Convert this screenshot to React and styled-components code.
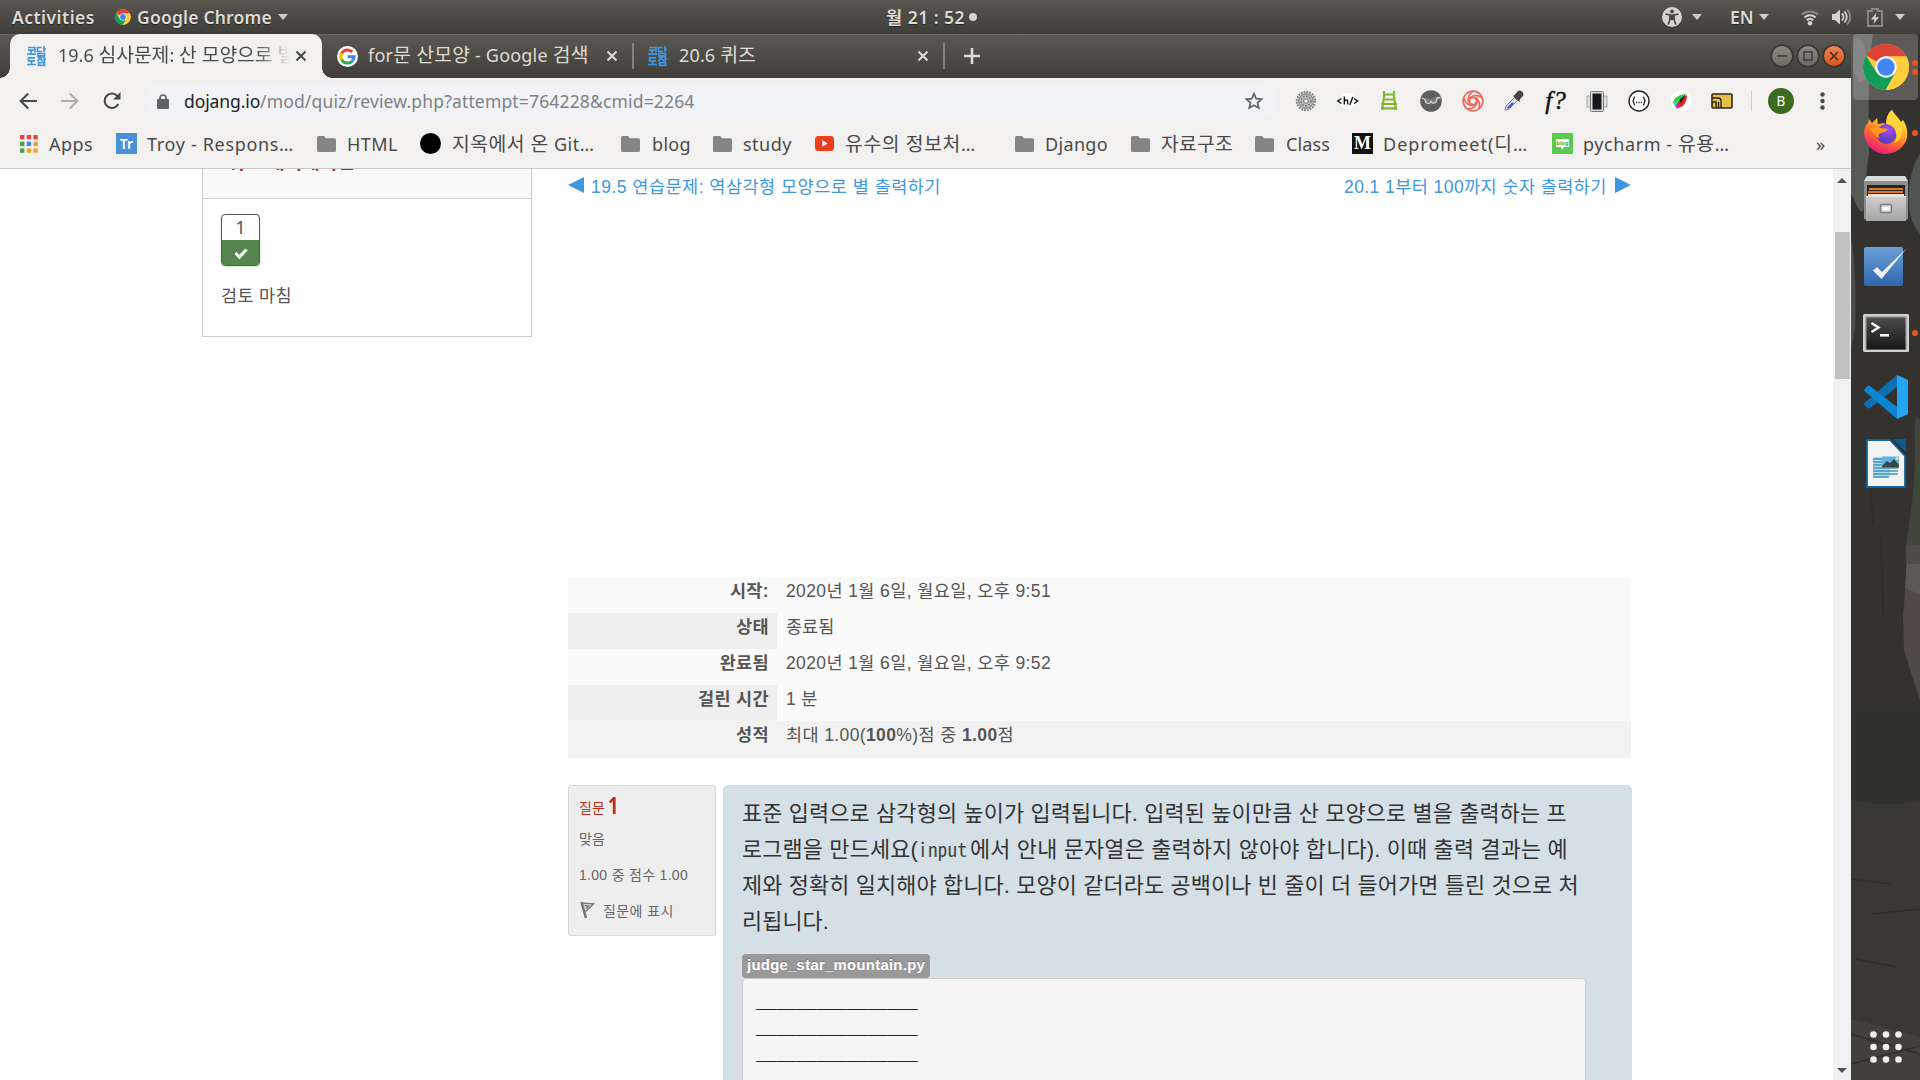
import React from "react";
import styled, { createGlobalStyle } from "styled-components";

const UI = `"Noto Sans","Noto Sans CJK KR",sans-serif`;
const BODY = `"Liberation Sans","Noto Sans CJK KR",sans-serif`;

const Global = createGlobalStyle`
  *{box-sizing:border-box}
  html,body{margin:0;padding:0;background:#fff;overflow:hidden}
  svg{display:block;flex:none;overflow:visible}
  p{margin:0}
`;

const Screen = styled.div`width:1920px;height:1080px;overflow:hidden;display:flex;flex-direction:column;font-family:${UI};`;

const Text = styled.span`
  flex:none;display:block;white-space:nowrap;width:${p => p.$w}px;margin-left:${p => p.$ml || 0}px;
  letter-spacing:${p => p.$ls || 0}px;
`;
/* Hangul runs in the browser chrome are set slightly larger than the Latin ones */
const K = styled.span`font-size:19.3px;line-height:1;`;
const Slot = styled.span`flex:none;display:flex;align-items:center;justify-content:center;width:${p => p.$w}px;margin-left:${p => p.$ml || 0}px;`;

/* ---------- system bar ---------- */
const SystemBar = styled.header`
  flex:none;height:34px;display:flex;align-items:center;background:linear-gradient(#58554d,#3f3e39);
  color:#dcdad5;font-size:17.5px;font-weight:600;line-height:34px;text-shadow:0 1px 1px rgba(0,0,0,.45);
`;
const Caret = styled.i`flex:none;width:0;height:0;border:5px solid transparent;border-top:6px solid #cfccc6;border-bottom:0;margin-left:${p => p.$ml}px;`;
const ClockDot = styled.i`flex:none;width:8px;height:8px;border-radius:50%;background:#d5d3ce;margin-left:4px;`;

/* ---------- window ---------- */
const Desk = styled.div`flex:1;display:flex;min-height:0;`;
const Window = styled.div`width:1851px;flex:none;display:flex;flex-direction:column;background:#fff;`;
const TabStrip = styled.div`
  height:44px;flex:none;display:flex;align-items:center;padding-left:10px;
  background:linear-gradient(#5a5850,#403e39);box-shadow:inset 0 1px #68665e;font-size:18px;color:#dfdbd2;line-height:26px;
`;
const TabTitle = styled(Text)`margin-bottom:2px;`;
const ActiveTab = styled.div`
  width:312px;height:44px;background:#f2f1ef;border-radius:10px 10px 0 0;display:flex;align-items:center;color:#4a4a4a;position:relative;flex:none;
  &::before,&::after{content:"";position:absolute;bottom:0;width:10px;height:10px}
  &::before{left:-10px;background:radial-gradient(circle at 0 0,transparent 9.5px,#f2f1ef 10px)}
  &::after{right:-10px;background:radial-gradient(circle at 100% 0,transparent 9.5px,#f2f1ef 10px)}
`;
const FadeClip = styled.div`width:232px;margin-left:12px;overflow:hidden;-webkit-mask-image:linear-gradient(90deg,#000 198px,transparent 232px);mask-image:linear-gradient(90deg,#000 198px,transparent 232px);`;
const Sep = styled.i`flex:none;width:${p => p.$w || 2}px;height:${p => p.$h}px;background:${p => p.$c};margin-left:${p => p.$ml}px;`;
const WinBtn = styled.span`
  flex:none;width:20px;height:20px;border-radius:50%;margin-left:${p => p.$ml}px;display:flex;align-items:center;justify-content:center;
  background:${p => p.$close ? "linear-gradient(#f08355,#d9541f)" : "linear-gradient(#8a877e,#6d6a62)"};
  box-shadow:0 0 0 1.5px #35332e;
`;
const Toolbar = styled.div`height:46px;flex:none;display:flex;align-items:center;background:#f2f1ef;font-size:17.5px;`;
const Omnibox = styled.div`width:1132px;height:37px;border-radius:19px;background:#f1f3f6;margin-left:24px;display:flex;align-items:center;flex:none;color:#7d8184;b{font-weight:400;color:#202124}`;
const FQ = styled.span`font:italic 400 25px/24px "Liberation Serif",serif;color:#111;-webkit-text-stroke:.5px #111;letter-spacing:1px;`;
const Avatar = styled.span`flex:none;width:26px;height:26px;border-radius:50%;background:#3d6b1f;color:#fff;font-size:13.5px;line-height:26px;text-align:center;margin-left:16px;`;
const Bookmarks = styled.div`height:45px;flex:none;display:flex;align-items:center;background:#f2f1ef;border-bottom:1px solid #cbc9c6;font-size:18px;color:#4a4a4a;padding-bottom:5px;line-height:26px;`;
const Black = styled.i`flex:none;width:21px;height:21px;border-radius:50%;background:#000;margin-left:${p => p.$ml}px;`;
const TrBox = styled.span`flex:none;width:21px;height:21px;background:#4a90d9;color:#fff;font:600 14px/21px ${UI};text-align:center;margin-left:23px;`;
const MBox = styled.span`flex:none;width:21px;height:21px;background:#111;color:#fff;font:700 18px/21px "Liberation Serif",serif;text-align:center;margin-left:22px;`;

/* ---------- page ---------- */
const Viewport = styled.div`flex:1;min-height:0;display:flex;overflow:hidden;font-family:${BODY};font-size:17.5px;color:#555;`;
const Page = styled.main`width:1833px;flex:none;display:flex;align-items:flex-start;padding-left:202px;overflow:hidden;`;
const SideBlock = styled.aside`width:330px;height:168px;flex:none;border:1px solid #ccc;border-top:0;overflow:hidden;`;
const BlockHead = styled.div`height:30px;display:flex;align-items:flex-start;background:#fafafa;border-bottom:1px solid #ccc;color:#b8261d;padding-left:24px;h2{margin:-18px 0 0;font-size:19px;line-height:24px;white-space:nowrap;font-weight:700}`;
const BlockBody = styled.div`padding:15px 0 0 18px;`;
const QBadge = styled.div`width:39px;height:52px;border:1px solid #555;border-radius:4px;overflow:hidden;box-shadow:0 1px 3px rgba(0,0,0,.12);text-align:center;font:17.5px/24px ${UI};`;
const QMark = styled.div`height:26px;margin-top:1px;background:#54874c;display:flex;align-items:center;justify-content:center;`;
const ReviewEnd = styled.div`margin-top:17px;line-height:26px;`;

const Content = styled.section`margin-left:36px;width:1064px;`;
const Pager = styled.nav`height:34px;display:flex;align-items:center;color:#3f97e0;padding-bottom:2px;`;
const PagerNext = styled.span`display:flex;align-items:center;gap:8px;margin-left:403px;`;
const Gap = styled.div`height:374px;`;
const Summary = styled.div`height:181px;width:1063px;`;
const SRow = styled.div`display:grid;grid-template-columns:209px 1fr;height:${p => p.$last ? 37 : 36}px;background:${p => p.$last ? "#f2f2f2" : "#fafafa"};line-height:28px;`;
const SHead = styled.div`background:${p => p.$dark ? "#efefef" : "transparent"};font-weight:700;display:flex;justify-content:flex-end;padding-right:8px;letter-spacing:.35px;`;
const SCell = styled.div`padding-left:9px;letter-spacing:${p => p.$ls || 0}px;`;
const Question = styled.div`display:flex;align-items:flex-start;margin-top:27px;`;
const Info = styled.div`width:148px;height:151px;background:#eee;border:1px solid #d8d8d8;border-radius:3px;padding:5px 0 0 10px;font-size:14px;color:#666;`;
const InfoRow = styled.div`height:${p => p.$h}px;display:flex;align-items:center;color:${p => p.$c || "inherit"};`;
const QNo = styled.b`font:700 23px/30px "Open Sans",sans-serif;transform:scaleX(.8);transform-origin:0 50%;color:#b8321f;display:block;margin:0 0 4px 3px;`;
const QBody = styled.div`width:909px;height:320px;margin-left:7px;background:#d5e0e6;border:1px solid #c3e4ef;border-radius:5px;padding:8px 0 0 18px;color:#333;`;
const QLine = styled.p`height:35.8px;display:flex;align-items:center;font-size:21.875px;white-space:nowrap;`;
const Code = styled(Text)`font-family:"Noto Sans Mono CJK KR","Liberation Mono",monospace;font-size:19px;font-weight:300;color:#444;padding-top:1px;`;
const FileTag = styled.div`width:188px;height:24px;margin-top:17px;background:#999;border-radius:4px;color:#fff;font-weight:700;font-size:14.8px;line-height:22px;padding-left:5px;text-shadow:0 -1px 0 rgba(0,0,0,.25);`;
const CodeBox = styled.pre`margin:0;width:844px;height:160px;background:#f5f5f5;border:1px solid #ccc;border-radius:4px;padding:12px 0 0 13px;font:16.85px/26px "Liberation Mono",monospace;color:#222;`;

const ScrollTrack = styled.div`width:18px;flex:none;background:#f1f1f1;display:flex;flex-direction:column;align-items:center;`;
const Thumb = styled.i`width:15px;height:147px;background:#c1c1c1;margin-top:49px;`;
const Up = styled.i`width:0;height:0;border:5px solid transparent;border-bottom:5px solid #505050;border-top:0;margin-top:9px;`;
const Down = styled.i`width:0;height:0;border:5px solid transparent;border-top:5px solid #505050;border-bottom:0;margin-top:auto;margin-bottom:7px;`;

/* ---------- dock ---------- */
const Dock = styled.aside`width:69px;flex:none;position:relative;overflow:hidden;background:#34322e;`;
const Wall = styled.div`position:absolute;inset:0;`;
const DockItems = styled.div`position:relative;height:100%;display:flex;flex-direction:column;`;
const DockItem = styled.div`
  height:${p => p.$h}px;margin-left:2px;width:67px;display:grid;grid-template-columns:65px 2px;align-items:center;position:relative;
  margin-top:${p => p.$end ? "auto" : 0};
  &::before{content:"";grid-area:1/1;height:100%;border-radius:4px;background:${p => p.$on ? "rgba(255,255,255,.2)" : "none"}}
  & > svg{grid-area:1/1;justify-self:center;margin-left:${p => p.$dx || 0}px}
`;
const Dots = styled.span`position:absolute;right:2px;top:0;bottom:0;display:flex;flex-direction:column;justify-content:center;gap:3px;i{width:6px;height:6px;border-radius:50%;background:#e95420}`;

/* ---------- drawings ---------- */
const Chrome = ({ s }) => (
  <svg width={s} height={s} viewBox="0 0 48 48">
    <circle cx="24" cy="24" r="23" fill="#ffcd40" />
    <path d="M24 24 4.1 12.5A23 23 0 0 1 43.9 12.5L43.9 13.500H24z" fill="#db4437" />
    <path d="M4.1 12.5A23 23 0 0 0 24 47l9.500-17.500L24 24 14.500 29.500z" fill="#0f9d58" />
    <path d="M24 13.500H44.500A23 23 0 0 1 23.500 47L33.500 29.500z" fill="#ffcd40" />
    <circle cx="24" cy="24" r="10.700" fill="#fff" />
    <circle cx="24" cy="24" r="8.700" fill="#4285f4" />
  </svg>
);
const Dojang = () => (
  <svg width="19" height="20" viewBox="0 0 19 20" fill="none" stroke="#4196e0" strokeWidth="1.7">
    <path d="M1 1.500h7v5M1 4.200h6M4 5v3M0 8.200h9M14.500 1.500h-4v4h4.500M17 0v6M16 3h3M11 7.500h6.500v2.300H11zM8 11.800H1.500v3H8M4.500 15v3M0 18.500h9M10.500 11.500h5M13 12l-2.500 3M13 12l2.500 3M17.200 10.500v6M17 13h2M11.500 16.700h6v2.700h-6z" />
  </svg>
);
const X = ({ c = "#dfdbd2" }) => <svg width="12" height="12" viewBox="0 0 12 12" stroke={c} strokeWidth="2.100" fill="none"><path d="M1.500 1.500l9 9M10.500 1.500l-9 9" /></svg>;
const GoogleG = () => (
  <svg width="21" height="21" viewBox="0 0 21 21">
    <circle cx="10.500" cy="10.500" r="10.500" fill="#fff" />
    <g fill="none" strokeWidth="3">
      <path d="M15.300 6A6.600 6.600 0 0 0 4.700 7.400" stroke="#ea4335" />
      <path d="M4.700 7.400a6.600 6.600 0 0 0 0 6.300" stroke="#fbbc05" />
      <path d="M4.700 13.700a6.600 6.600 0 0 0 10.300 1.600" stroke="#34a853" />
      <path d="M10.600 10.700h6.500a6.600 6.600 0 0 1-2.100 4.600" stroke="#4285f4" />
    </g>
  </svg>
);
const Folder = () => <svg width="19" height="16" viewBox="0 0 19 16"><path d="M1.500 0H7l2 2.300h8.500A1.500 1.500 0 0 1 19 3.800v10.700a1.500 1.500 0 0 1-1.500 1.500h-16A1.500 1.500 0 0 1 0 14.500v-13A1.500 1.500 0 0 1 1.500 0z" fill="#858585" /></svg>;
const Arrow = ({ c, flip }) => <svg width="18" height="18" viewBox="0 0 18 18" fill="none" stroke={c} strokeWidth="2.100"><path d={flip ? "M0 9h16M8.800 1.500 16.300 9l-7.500 7.500" : "M18 9H2M9.200 1.500 1.700 9l7.500 7.500"} /></svg>;
const Reload = () => <svg width="18" height="18" viewBox="0 0 18 18"><path d="M15.300 12A7.200 7.200 0 1 1 14.300 4" fill="none" stroke="#4a4a4a" strokeWidth="2.100" /><path d="M17.500 0v7.500H10z" fill="#4a4a4a" /></svg>;
const Lock = () => <svg width="12" height="15" viewBox="0 0 12 15"><rect y="5" width="12" height="10" rx="1.200" fill="#5f6368" /><path d="M3 6V4a3 3 0 0 1 6 0v2" fill="none" stroke="#5f6368" strokeWidth="1.700" /></svg>;
const Star = () => <svg width="18" height="18" viewBox="0 0 18 18"><path d="M9 1.700l2.200 5 5.400.5-4.100 3.600 1.200 5.300L9 13.300l-4.700 2.800 1.200-5.300L1.400 7.200l5.400-.5z" fill="none" stroke="#5f6368" strokeWidth="1.700" /></svg>;
const Gear = () => <svg width="22" height="22" viewBox="0 0 22 22" fill="none"><circle cx="11" cy="11" r="9" stroke="#8b8b8b" strokeWidth="2.500" strokeDasharray="1.900 .93" /><circle cx="11" cy="11" r="7.300" fill="#bdbdbd" stroke="#777" /><circle cx="11" cy="11" r="4.900" stroke="#808080" strokeWidth="1.600" strokeDasharray="2 1.200" /><circle cx="11" cy="11" r="2.300" fill="#eee" stroke="#777" /></svg>;
const HCode = () => <svg width="22" height="20" viewBox="0 0 22 20" fill="none" stroke="#111" strokeWidth="1.400"><circle cx="11" cy="10" r="8" fill="#fff" stroke="none" /><path d="M4.500 7.500.8 10l3.700 2.500M17 7.500l3.700 2.500-3.700 2.500M7.300 5.500v8M7.300 10.500c1-2 3.400-2 3.400 0v3M15.800 6l-3 8" /></svg>;
const Ladder = () => <svg width="18" height="20" viewBox="0 0 18 20" fill="none" stroke="#82b731" strokeWidth="2.200"><path d="M4 0v6l-2 13M14 0v6l2 13M3 3.500h12M3 8.500h12M1 13h16M1 17.300h16" /></svg>;
const Glasses = () => <svg width="22" height="22" viewBox="0 0 22 22"><circle cx="11" cy="11" r="10.800" fill="#5e5e5e" /><path d="M2 8l3.500 1.500 6 1.500 5.500-3 3.500-.5" fill="none" stroke="#ddd" strokeWidth="1.300" /><path d="M5 9.500c0 5 5.500 5 6 1.500 1.500 4 6.500 2 6-3" fill="#7d7d7d" stroke="#ddd" strokeWidth="1.100" /></svg>;
const Swirl = () => (
  <svg width="22" height="22" viewBox="-11 -11 22 22" fill="none" stroke="#ec6a5e" strokeWidth="1.700">
    <circle r="9.900" />
    {[0, 72, 144, 216, 288].map(a => <path key={a} transform={`rotate(${a})`} d="M-2.200-2.600C1-5 6-3.500 6.500 3.500 6.500 5.500 6 7 5.500 8" />)}
  </svg>
);
const Dropper = () => <svg width="22" height="22" viewBox="0 0 22 22"><path d="M2 20l1-4 8.500-8.500 3 3L6 19z" fill="#d7dcec" stroke="#777" /><path d="M4 17.500l5-5 2 1L6 18.500z" fill="#3f55d6" /><path d="M10 6l2-1.500 3-3.500c2-2 7 1.500 5 5l-3 3-.5 3z" fill="#444" /></svg>;
const Phone = () => <svg width="20" height="21" viewBox="0 0 20 21"><rect x="0" y="5" width="20" height="11" fill="#ddd" stroke="#aaa" /><rect x="3.500" y=".5" width="13" height="20" rx="1" fill="#ddd" stroke="#777" /><rect x="5.500" y="2.500" width="9" height="16" fill="#17171d" /></svg>;
const Braces = () => <svg width="22" height="22" viewBox="0 0 22 22" fill="none" stroke="#222" strokeWidth="1.400"><circle cx="11" cy="11" r="10" fill="#fff" /><path d="M7 7c-2 0-.5 4-2.500 4 2 0 .5 4 2.500 4M15 7c2 0 .5 4 2.500 4-2 0-.5 4-2.500 4" /><path d="M8 12.500h1.200M10.400 12.500h1.200M12.800 12.500H14" /></svg>;
const Feather = () => <svg width="22" height="22" viewBox="0 0 22 22"><circle cx="11" cy="11" r="10.500" fill="#fff" /><path d="M3 13c0-5 7-9 13-9-5 3-6 7-9 11z" fill="#2bd52f" /><path d="M4 14l9-8-8 11z" fill="#0ee8e8" /><path d="M6 18c0-5 5-10 11-13 0 5-2 12-9 13z" fill="#e8251b" /><path d="M5 15l2 4 3-3z" fill="#f31ad5" /><path d="M9 10l7-6-5 9z" fill="#111" /></svg>;
const Cast = () => <svg width="22" height="16" viewBox="0 0 22 16" fill="none"><rect x="1" y="1" width="20" height="14" rx="1" fill="#e5bf49" stroke="#2b2718" strokeWidth="1.600" /><path d="M1.500 5h5.500q3 0 3 3v7M1.500 9h3.500v6M7.500 15V9" stroke="#2b2718" strokeWidth="1.400" /></svg>;
const AppsGrid = () => <svg width="18" height="18" viewBox="0 0 18 18">{["#e8453c", "#e8453c", "#e8453c", "#4aa04d", "#4285f4", "#eda62b", "#4aa04d", "#eda62b", "#eda62b"].map((c, i) => <rect key={i} x={(i % 3) * 6.700} y={Math.floor(i / 3) * 6.700} width="4.400" height="4.400" fill={c} />)}</svg>;
const YT = () => <svg width="19" height="15" viewBox="0 0 19 15"><rect width="19" height="15" rx="3.500" fill="#ee3c1c" /><path d="M7.300 4.200v6.600L12.700 7.500z" fill="#fff" /></svg>;
const BlogIcon = () => <svg width="21" height="21" viewBox="0 0 21 21"><rect width="21" height="21" rx="1" fill="#5bc94e" /><path d="M4 6h13v8h-5l-2 2.500L9 14H4z" fill="#fff" /><text x="10.500" y="12.200" fontSize="5.500" fontWeight="700" fill="#3faf38" textAnchor="middle" fontFamily="Noto Sans">blog</text></svg>;
const Triangle = ({ left }) => <svg width="16" height="16" fill="#3f97e0"><path d={left ? "M16 0v16L0 8z" : "M0 0v16l16-8z"} /></svg>;
const Flag = () => <svg width="16" height="18" viewBox="0 0 16 18" fill="none" stroke="#777"><path d="M2.500 1l4.500 16" strokeWidth="2.600" /><path d="M3.500 2.300l11 .5L6.500 10.500M5.500 4.500l4 .5-2.500 2.500" strokeWidth="1.500" /></svg>;

const Access = () => <svg width="20" height="20" viewBox="0 0 20 20"><circle cx="10" cy="10" r="10" fill="#d5d3ce" /><circle cx="10" cy="4.500" r="1.900" fill="#4a4842" /><path d="M3.500 7l4.500 1v4l-1.800 5.500M16.500 7 12 8v4l1.800 5.500" stroke="#4a4842" strokeWidth="1.600" fill="none" /><path d="M7.500 7.500h5v5.500h-5z" fill="#4a4842" /></svg>;
const Wifi = () => <svg width="18" height="17" viewBox="0 0 18 17" fill="none" strokeWidth="2"><path d="M1 5.500a12 12 0 0 1 16 0" stroke="#8b8881" /><path d="M3.500 8.500a8 8 0 0 1 11 0M5.800 11.300a4.800 4.800 0 0 1 6.400 0" stroke="#d5d3ce" /><circle cx="9" cy="14.300" r="2.300" fill="#d5d3ce" /></svg>;
const Volume = () => <svg width="19" height="18" viewBox="0 0 19 18" fill="none" strokeWidth="1.800"><path d="M0 6h3l5-4.500v15L3 12H0z" fill="#d5d3ce" /><path d="M10 5.500a5 5 0 0 1 0 7M12.500 3.500a8 8 0 0 1 0 11" stroke="#d5d3ce" /><path d="M15.200 1.500a11 11 0 0 1 0 15" stroke="#8b8881" /></svg>;
const Battery = () => <svg width="16" height="19" viewBox="0 0 16 19"><path d="M5 1h6v2h4v15H1V3h4z" fill="none" stroke="#8b8881" strokeWidth="1.900" /><path d="M9.500 4.500 4 11.500h3.500L6.500 16 12 9.200H8.500z" fill="#d5d3ce" /></svg>;

const Firefox = () => (
  <svg width="46" height="48" viewBox="0 0 46 48">
    <defs>
      <linearGradient id="ff" x1=".8" y1="0" x2=".3" y2="1"><stop offset="0" stopColor="#fff44f" /><stop offset=".35" stopColor="#ffbd2f" /><stop offset=".65" stopColor="#ff6a2b" /><stop offset="1" stopColor="#e31587" /></linearGradient>
      <radialGradient id="fp" cx=".6" cy=".3" r=".8"><stop offset="0" stopColor="#a14cf2" /><stop offset="1" stopColor="#4a3aa8" /></radialGradient>
    </defs>
    <path d="M29 1c2 4 7 8 9 12l2-2c4 6 5 12 4 18A22 22 0 0 1 1 25c0-6 2-9 4-11l1-4 3 4 5-5 1 6c4-1 6-1 8 0 0-6 2-11 6-14z" fill="url(#ff)" />
    <path d="M1 25c3 12 12 18 22 18s18-5 21-14a22 22 0 0 1-43-4z" fill="#f5257c" opacity=".65" />
    <circle cx="23.500" cy="25" r="10" fill="url(#fp)" />
    <path d="M6 20c4-2 8-3 12-1l7 1c-1 3-5 3-7 4-3 1-3 3-1 5-6-1-6-6-11-9z" fill="#ff9a1f" />
    <path d="M29 1c-4 4-6 8-5 14 4 1 8 3 9 9 2 3 0 8-2 10 6-2 9-8 8-15-1-7-8-11-10-18z" fill="#ffd43a" />
  </svg>
);
const Files = () => (
  <svg width="44" height="46" viewBox="0 0 44 46">
    <defs><linearGradient id="fl" x1="0" y1="0" x2="0" y2="1"><stop offset="0" stopColor="#cfcfcf" /><stop offset="1" stopColor="#a4a4a4" /></linearGradient></defs>
    <path d="M3 0h38l3 5v38l-3 1H3l-3-1V5z" fill="#8d8d8d" /><path d="M3 0h38l3 5H0z" fill="#dadada" />
    <rect x="3" y="9" width="38" height="14" fill="#2b2521" />
    <path d="M5 12h34v2H5zM4 15h35v2H4z" fill="#d97a22" /><path d="M4 18h36v2H4z" fill="#f3e4cf" />
    <path d="M2 20h40v25H2z" fill="url(#fl)" /><path d="M2 20h40v1H2z" fill="#e8e8e8" />
    <rect x="16.500" y="28.500" width="11" height="8" rx="1.500" fill="#ddd" stroke="#7b7b7b" strokeWidth="1.500" /><rect x="19" y="31" width="6" height="3" fill="#fff" />
  </svg>
);
const Check = () => (
  <svg width="39" height="39" viewBox="0 0 39 39">
    <defs><linearGradient id="ck" x1="0" y1="0" x2="0" y2="1"><stop offset="0" stopColor="#6ba1d6" /><stop offset="1" stopColor="#2f66ad" /></linearGradient></defs>
    <rect width="39" height="39" rx="2" fill="url(#ck)" /><path d="M9 23.500l4-3.500 5 5L42.500 1.500 17.500 32z" fill="#f4f7fa" opacity=".95" />
  </svg>
);
const Terminal = () => (
  <svg width="46" height="38" viewBox="0 0 46 38">
    <defs><linearGradient id="tm" x1="0" y1="0" x2="0" y2="1"><stop offset="0" stopColor="#4c4c4c" /><stop offset="1" stopColor="#161616" /></linearGradient></defs>
    <rect width="46" height="38" rx="1.500" fill="#d0d0ce" /><rect x="2" y="2" width="42" height="34" fill="#a9a9a7" /><rect x="3.500" y="3.500" width="39" height="32" fill="url(#tm)" />
    <path d="M8.500 9l7 4.500-7 4.500" fill="none" stroke="#f4f4f4" strokeWidth="2.400" /><path d="M17 20h9v2.600h-9z" fill="#f4f4f4" />
  </svg>
);
const VSCode = () => (
  <svg width="44" height="44" viewBox="0 0 44 44">
    <path d="M33 0v12L6 33q-1.500 1-2.500 0L.6 30.300q-1.200-1.300 0-2.500z" fill="#0a6fb5" />
    <path d="M33 44V32L6 11q-1.500-1-2.500 0L.6 13.700q-1.200 1.300 0 2.500z" fill="#0b86d1" />
    <path d="M33 0l10 4.500q1 .5 1 1.500v32q0 1-1 1.500L33 44z" fill="#26a5f2" />
  </svg>
);
const Impress = () => (
  <svg width="40" height="49" viewBox="0 0 40 49">
    <path d="M1 1h23l15 16v31H1z" fill="#f3f3f3" stroke="#12659b" strokeWidth="1.800" /><path d="M27 0h13v13z" fill="#0d5c91" />
    <path d="M7 18h17v20H7z" fill="#b7d9e9" /><path d="M7 20h17M7 23h17M7 26h17M7 29h25M7 32h25M7 35h25M7 38h16" stroke="#3f95bd" strokeWidth="1.300" />
    <rect x="16" y="17.500" width="17" height="11" fill="#5db4e8" /><path d="M16 27l5-5 3 2 4-4 5 6v2.500H16z" fill="#3f4644" /><circle cx="31" cy="19.500" r="1.500" fill="#ffe14c" />
  </svg>
);
const Wallpaper = () => (
  <svg width="69" height="1046" viewBox="0 0 69 1046">
    <rect width="69" height="1046" fill="#34322e" />
    <path d="M0 0h22c-6 40-4 80-4 120-4 20-2 45-6 58L8 176 0 160z" fill="#585a57" />
    <path d="M3 5c8-4 12 6 12 20v20L8 49 2 35z" fill="#77777a" opacity=".5" />
    <path d="M69 120c-8 12-12 30-11 50 0 14 6 24 11 30z" fill="#4e5451" />
    <path d="M0 205c4 10 5 60 4 90l-4 20z" fill="#4b4d4a" />
    <path d="M69 386c-5-6-6-4-5 20 0 40-3 70-9 105h14z" fill="#40463a" />
    <path d="M69 511H55q1 35-3 70l1 35q6 20 16 50z" fill="#4f4b44" />
    <path d="M69 530H56l-2 24 15 6z" fill="#5c5952" />
    <path d="M0 680q35-6 69 0v90q-30 8-69-4z" fill="#31332a" />
    <path d="M0 766q40 8 69 0v280H0z" fill="#393731" />
    <path d="M0 985l69 18v43H0z" fill="#433f3a" />
    <path d="M0 1000l69 20M0 1030l69-18M0 845l40 5M20 880l49-5M5 925l40 8M18 430l4 60M30 500l2 80" stroke="#2f2d29" strokeWidth="1.500" fill="none" />
  </svg>
);
const Grid9 = () => <svg width="32" height="32" viewBox="0 0 32 32" fill="#f1f0ee">{[3.500, 16, 28.500].map(y => [3.500, 16, 28.500].map(x => <circle key={x + "-" + y} cx={x} cy={y} r="3.300" />))}</svg>;

const rows = [
  ["시작:", "2020년 1월 6일, 월요일, 오후 9:51", 0.39],
  ["상태", "종료됨", 0],
  ["완료됨", "2020년 1월 6일, 월요일, 오후 9:52", 0.39],
  ["걸린 시간", "1 분", 0.3],
];

const extensions = [
  [18, <Gear />], [20, <HCode />], [19, <Ladder />], [20, <Glasses />], [20, <Swirl />], [19, <Dropper />],
  [20, <FQ>f?</FQ>], [19, <Phone />], [20, <Braces />], [20, <Feather />], [19, <Cast />],
];

export default function App() {
  return (
    <Screen>
      <Global />
      <SystemBar>
        <Text $w={83} $ml={12} $ls={0.49}>Activities</Text>
        <Slot $w={16} $ml={20}><Chrome s={16} /></Slot>
        <Text $w={135} $ml={6} $ls={0.2}>Google Chrome</Text>
        <Caret $ml={6} />
        <Text $w={79} $ml={598} $ls={0.49}>월 21 : 52</Text>
        <ClockDot />
        <Slot $w={20} $ml={685}><Access /></Slot>
        <Caret $ml={10} />
        <Text $w={24} $ml={28}>EN</Text>
        <Caret $ml={5} />
        <Slot $w={18} $ml={32}><Wifi /></Slot>
        <Slot $w={19} $ml={13}><Volume /></Slot>
        <Slot $w={16} $ml={16}><Battery /></Slot>
        <Caret $ml={12} />
      </SystemBar>
      <Desk>
        <Window>
          <TabStrip>
            <ActiveTab>
              <Slot $w={19} $ml={17}><Dojang /></Slot>
              <FadeClip><TabTitle $w={240}>19.6 <K>심사문제</K>: <K>산 모양으로 별</K></TabTitle></FadeClip>
              <Slot $w={12} $ml={5}><X c="#4a4a4a" /></Slot>
            </ActiveTab>
            <Slot $w={21} $ml={15}><GoogleG /></Slot>
            <TabTitle $w={221} $ml={10} $ls={0.2}>for<K>문 산모양</K> - Google <K>검색</K></TabTitle>
            <Slot $w={12} $ml={17}><X /></Slot>
            <Sep $h={26} $c="#85827a" $ml={14} />
            <Slot $w={19} $ml={14}><Dojang /></Slot>
            <TabTitle $w={77} $ml={12} $ls={0.15}>20.6 <K>퀴즈</K></TabTitle>
            <Slot $w={12} $ml={161}><X /></Slot>
            <Sep $h={26} $c="#85827a" $ml={14} />
            <Slot $w={16} $ml={19}><svg width="16" height="16" stroke="#dfdbd2" strokeWidth="2.600"><path d="M8 0v16M0 8h16" /></svg></Slot>
            <WinBtn $ml={792}><svg width="10" height="10" stroke="#3b3a35" strokeWidth="1.500"><path d="M0 5h10" /></svg></WinBtn>
            <WinBtn $ml={6}><svg width="10" height="10" stroke="#3b3a35" strokeWidth="1.500" fill="none"><path d="M1 1h8v8H1z" /></svg></WinBtn>
            <WinBtn $ml={6} $close><svg width="8" height="8" stroke="#4a2a18" strokeWidth="1.600"><path d="M0 0l8 8M8 0L0 8" /></svg></WinBtn>
          </TabStrip>
          <Toolbar>
            <Slot $w={18} $ml={19}><Arrow c="#4a4a4a" /></Slot>
            <Slot $w={18} $ml={24}><Arrow c="#aeadab" flip /></Slot>
            <Slot $w={18} $ml={24}><Reload /></Slot>
            <Omnibox>
              <Slot $w={12} $ml={12}><Lock /></Slot>
              <Text $w={76} $ml={15} $ls={-0.1}><b>dojang.io</b></Text>
              <Text $w={434} $ls={0.16}>/mod/quiz/review.php?attempt=764228&amp;cmid=2264</Text>
              <Slot $w={18} $ml={551}><Star /></Slot>
            </Omnibox>
            {extensions.map(([ml, icon], i) => <Slot key={i} $w={22} $ml={ml}>{icon}</Slot>)}
            <Sep $w={1} $h={20} $c="#cfcdca" $ml={18} />
            <Avatar>B</Avatar>
            <Slot $w={6} $ml={25}><svg width="5" height="18" fill="#4a4a4a"><circle cx="2.500" cy="2.500" r="2.200" /><circle cx="2.500" cy="9" r="2.200" /><circle cx="2.500" cy="15.500" r="2.200" /></svg></Slot>
          </Toolbar>
          <Bookmarks>
            <Slot $w={18} $ml={20}><AppsGrid /></Slot><Text $w={44} $ml={11} $ls={0.43}>Apps</Text>
            <TrBox>Tr</TrBox><Text $w={147} $ml={10} $ls={0.67}>Troy - Respons…</Text>
            <Slot $w={19} $ml={23}><Folder /></Slot><Text $w={51} $ml={11} $ls={0.47}>HTML</Text>
            <Black $ml={22} /><Text $w={143} $ml={11} $ls={0.5}><K>지옥에서 온</K> Git…</Text>
            <Slot $w={19} $ml={26}><Folder /></Slot><Text $w={39} $ml={12} $ls={0.33}>blog</Text>
            <Slot $w={19} $ml={22}><Folder /></Slot><Text $w={49} $ml={11} $ls={0.5}>study</Text>
            <Slot $w={19} $ml={23}><YT /></Slot><Text $w={131} $ml={11} $ls={0.65}><K>유수의 정보처</K>…</Text>
            <Slot $w={19} $ml={39}><Folder /></Slot><Text $w={63} $ml={11} $ls={0.34}>Django</Text>
            <Slot $w={19} $ml={23}><Folder /></Slot><Text $w={72} $ml={11} $ls={0.25}><K>자료구조</K></Text>
            <Slot $w={19} $ml={22}><Folder /></Slot><Text $w={44} $ml={12} $ls={0.13}>Class</Text>
            <MBox>M</MBox><Text $w={146} $ml={10} $ls={1}>Depromeet(<K>디</K>…</Text>
            <Slot $w={21} $ml={23}><BlogIcon /></Slot><Text $w={146} $ml={10} $ls={0.58}>pycharm - <K>유용</K>…</Text>
            <Text $w={10} $ml={87}>»</Text>
          </Bookmarks>
          <Viewport>
            <Page>
              <SideBlock>
                <BlockHead><h2>퀴즈 내비게이션</h2></BlockHead>
                <BlockBody>
                  <QBadge>1<QMark><svg width="14" height="11" fill="none" stroke="#fff" strokeWidth="3"><path d="M1.500 5l4 4 7-7.500" /></svg></QMark></QBadge>
                  <ReviewEnd><Text $w={75} $ls={0.35}>검토 마침</Text></ReviewEnd>
                </BlockBody>
              </SideBlock>
              <Content>
                <Pager>
                  <Triangle left />
                  <Text $w={350} $ml={7} $ls={0.48}>19.5 연습문제: 역삼각형 모양으로 별 출력하기</Text>
                  <PagerNext><Text $w={263} $ls={0.43}>20.1 1부터 100까지 숫자 출력하기</Text><Triangle /></PagerNext>
                </Pager>
                <Gap />
                <Summary>
                  {rows.map(([k, v, ls], i) => (
                    <SRow key={k}><SHead $dark={i % 2 === 1}>{k}</SHead><SCell $ls={ls}>{v}</SCell></SRow>
                  ))}
                  <SRow $last><SHead>성적</SHead><SCell $ls={0.38}>최대 1.00(<b>100</b>%)점 중 <b>1.00</b>점</SCell></SRow>
                </Summary>
                <Question>
                  <Info>
                    <InfoRow $h={31} $c="#b8321f"><Text $w={26}>질문</Text><QNo>1</QNo></InfoRow>
                    <InfoRow $h={31}><Text $w={26}>맞음</Text></InfoRow>
                    <InfoRow $h={41}><Text $w={109} $ls={0.3}>1.00 중 점수 1.00</Text></InfoRow>
                    <InfoRow $h={31}><Flag /><Text $w={71} $ml={8} $ls={0.4}>질문에 표시</Text></InfoRow>
                  </Info>
                  <QBody>
                    <QLine><Text $w={825} $ls={0.16}>표준 입력으로 삼각형의 높이가 입력됩니다. 입력된 높이만큼 산 모양으로 별을 출력하는 프</Text></QLine>
                    <QLine>
                      <Text $w={176} $ls={0.17}>로그램을 만드세요(</Text>
                      <Code $w={52} $ls={0.4}>input</Code>
                      <Text $w={598} $ls={0.19}>에서 안내 문자열은 출력하지 않아야 합니다). 이때 출력 결과는 예</Text>
                    </QLine>
                    <QLine><Text $w={837} $ls={0.15}>제와 정확히 일치해야 합니다. 모양이 같더라도 공백이나 빈 줄이 더 들어가면 틀린 것으로 처</Text></QLine>
                    <QLine><Text $w={87} $ls={0.09}>리됩니다.</Text></QLine>
                    <FileTag><Text $w={178} $ls={0.32}>judge_star_mountain.py</Text></FileTag>
                    <CodeBox>{"________________\n________________\n________________"}</CodeBox>
                  </QBody>
                </Question>
              </Content>
            </Page>
            <ScrollTrack><Up /><Thumb /><Down /></ScrollTrack>
          </Viewport>
        </Window>
        <Dock>
          <Wall><Wallpaper /></Wall>
          <DockItems>
            <DockItem $h={66} $on><Chrome s={48} /><Dots><i /><i /></Dots></DockItem>
            <DockItem $h={66}><Firefox /><Dots><i /></Dots></DockItem>
            <DockItem $h={66}><Files /></DockItem>
            <DockItem $h={69} $dx={-5}><Check /></DockItem>
            <DockItem $h={64}><Terminal /><Dots><i /></Dots></DockItem>
            <DockItem $h={64}><VSCode /></DockItem>
            <DockItem $h={68}><Impress /></DockItem>
            <DockItem $h={66} $end><Grid9 /></DockItem>
          </DockItems>
        </Dock>
      </Desk>
    </Screen>
  );
}
